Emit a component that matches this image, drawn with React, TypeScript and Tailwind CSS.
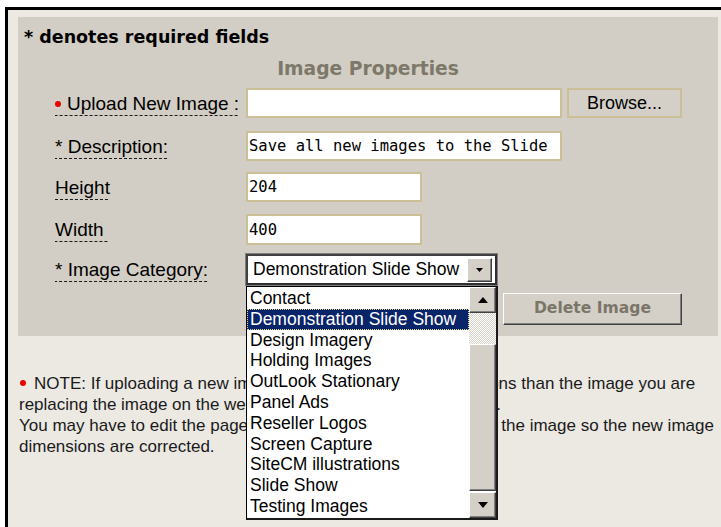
const sans = "font-['Liberation_Sans',Arial,sans-serif]";
const bold = "font-['DejaVu_Sans',Verdana,sans-serif] font-bold";
const mono = "font-['DejaVu_Sans_Mono',monospace]";

const categories = [
  "Contact",
  "Demonstration Slide Show",
  "Design Imagery",
  "Holding Images",
  "OutLook Stationary",
  "Panel Ads",
  "Reseller Logos",
  "Screen Capture",
  "SiteCM illustrations",
  "Slide Show",
  "Testing Images",
];

const bevel =
  "bg-[#d4d0c8] border border-t-white border-l-white border-r-[#404040] border-b-[#404040] shadow-[inset_-1px_-1px_0_#808080]";

function RedDot() {
  return <span className="inline-block w-[6px] h-[6px] rounded-full bg-[#e60000] align-[3px]" />;
}

function FieldLabel({ children }: { children: React.ReactNode }) {
  return (
    <span className="inline-block mt-[5px] pb-[2px] leading-[21px] text-[19px] text-black whitespace-pre bg-[linear-gradient(to_right,#1a1a1a_60%,transparent_60%)] bg-[length:5px_1px] bg-repeat-x bg-bottom">
      {children}
    </span>
  );
}

function Row({ label, className, children }: { label: React.ReactNode; className: string; children: React.ReactNode }) {
  return (
    <div className={`flex ${className}`}>
      <div className="w-[228px] pl-[37px] shrink-0">
        <FieldLabel>{label}</FieldLabel>
      </div>
      {children}
    </div>
  );
}

function Triangle({ up, w, h }: { up?: boolean; w: number; h: number }) {
  return (
    <svg width={w} height={h} viewBox={`0 0 ${w} ${h}`}>
      <polygon points={up ? `0,${h} ${w},${h} ${w / 2},0` : `0,0 ${w},0 ${w / 2},${h}`} fill="#000" />
    </svg>
  );
}

const textBox =
  "h-full bg-white border-2 border-[#cbbf98] outline-none px-[1px] text-[15.5px] text-black " + mono;

export default function App() {
  return (
    <div className={`w-[721px] h-[527px] overflow-hidden bg-white ${sans}`}>
      <div className="ml-[5px] mt-[7px] w-[716px] h-[520px] border-t-[3px] border-l-[3px] border-black bg-[#ece9e3] pl-[10px]">
        {/* form panel */}
        <div className="mt-[7px] w-[700px] h-[319px] bg-[#d2cec5]">
          <div className={`pl-[6px] pt-[10px] leading-[20px] text-[17.5px] text-black ${bold}`}>
            * denotes required fields
          </div>
          <div className={`mt-[10.5px] text-center leading-[22px] text-[18.7px] text-[#7d7869] ${bold}`}>
            Image Properties
          </div>

          <Row
            className="mt-[8.5px] h-[30px]"
            label={
              <>
                <RedDot />
                <span className="ml-[6px]">Upload New Image :</span>
              </>
            }
          >
            <input readOnly className={`${textBox} w-[316px]`} defaultValue="" />
            <button className="ml-[5px] w-[115px] h-full bg-[#d4d0c8] border-2 border-[#cbbf98] text-[18px] text-black">
              Browse...
            </button>
          </Row>

          <Row className="mt-[13px] h-[30px]" label="* Description:">
            <input readOnly className={`${textBox} w-[316px]`} defaultValue="Save all new images to the Slide" />
          </Row>

          <Row className="mt-[11px] h-[30px]" label="Height">
            <input readOnly className={`${textBox} w-[176px]`} defaultValue="204" />
          </Row>

          <Row className="mt-[12px] h-[31px]" label="Width ">
            <input readOnly className={`${textBox} w-[176px]`} defaultValue="400" />
          </Row>

          <Row className="mt-[9px] h-[31px]" label="* Image Category:">
            <div className="relative w-[251px] h-full">
              <div className="flex items-center h-full bg-white border-2 border-t-[#404040] border-l-[#404040] border-r-[#303030] border-b-[#303030] shadow-[0_0_0_1px_#808080]">
                <span className="flex-1 pl-[5px] text-[17.5px] leading-none text-black whitespace-nowrap">
                  Demonstration Slide Show
                </span>
                <span className={`w-[25px] h-[24px] mr-[3px] flex items-center justify-center ${bevel}`}>
                  <Triangle w={7} h={4} />
                </span>
              </div>

              {/* open dropdown list */}
              <div className="absolute left-0 top-[32px] z-10 w-[252px] h-[234px] flex bg-white border-l border-t border-black border-r-2 border-b-2 border-r-[#1a1a1a] border-b-[#1a1a1a]">
                <ul className="flex-1 pt-[1px]">
                  {categories.map((c, i) => (
                    <li
                      key={c}
                      className={
                        "h-[20.8px] leading-[20.8px] pl-[3px] text-[17.5px] whitespace-nowrap " +
                        (i === 1
                          ? "bg-[#0a246a] text-white outline outline-1 outline-dotted outline-[#e9d98a] -outline-offset-1"
                          : "text-black")
                      }
                    >
                      {c}
                    </li>
                  ))}
                </ul>
                <div className="w-[27px] flex flex-col">
                  <div className={`h-[26px] flex items-center justify-center ${bevel}`}>
                    <Triangle up w={10} h={6} />
                  </div>
                  <div className="h-[31px] bg-[repeating-conic-gradient(#d4d0c8_0_25%,#ffffff_0_50%)] bg-[length:2px_2px]" />
                  <div className={`flex-1 ${bevel}`} />
                  <div className={`h-[26px] mt-[1px] flex items-center justify-center ${bevel}`}>
                    <Triangle w={10} h={6} />
                  </div>
                </div>
              </div>
            </div>
          </Row>

          <div className="mt-[8px] ml-[485px]">
            <button className={`w-[179px] h-[32px] text-[15.6px] text-[#7c7668] ${bevel} ${bold}`}>
              Delete Image
            </button>
          </div>
        </div>

        {/* note under the panel */}
        <p className="mt-[36.5px] pl-[1px] text-[17px] leading-[21px] text-[#1a1a1a] whitespace-nowrap">
          <span className="inline-block w-[6px] h-[6px] rounded-full bg-[#e60000] align-[3px] ml-[1px] mr-[8px]" />
          NOTE: If uploading a new image which has different dimensions than the image you are
          <br />
          replacing the image on the website, the image may be distorted.
          <br />
          You may have to edit the page that shows the image and resize the image so the new image
          <br />
          dimensions are corrected.
        </p>
      </div>
    </div>
  );
}
